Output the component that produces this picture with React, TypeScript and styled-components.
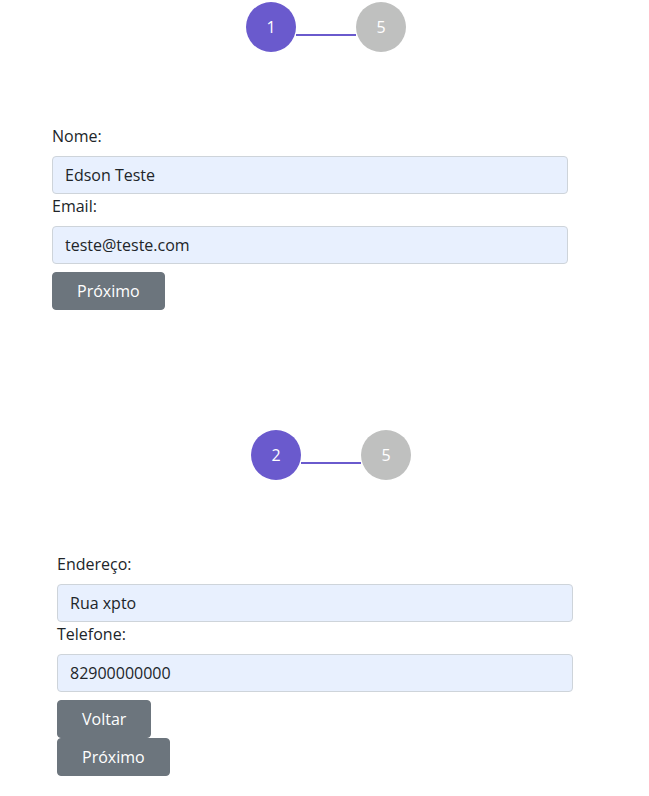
import styled, { createGlobalStyle } from 'styled-components';

const GlobalStyle = createGlobalStyle`
  body {
    margin: 0;
    font-family: "Open Sans", "Noto Sans", sans-serif;
    color: #212529;
    background: #fff;
  }
`

const purple = '#6a5acd';
const grey = '#bfc0bf';

type Field = { label: string; value: string };

const steps: { current: number; shift: number; fields: Field[]; back: boolean }[] = [
  {
    current: 1,
    shift: 0,
    fields: [
      { label: 'Nome:', value: 'Edson Teste' },
      { label: 'Email:', value: 'teste@teste.com' },
    ],
    back: false,
  },
  {
    current: 2,
    shift: 5,
    fields: [
      { label: 'Endereço:', value: 'Rua xpto' },
      { label: 'Telefone:', value: '82900000000' },
    ],
    back: true,
  },
];

function App() {
  return (
    <Page>
      <GlobalStyle />
      {steps.map((step) => (
        <Section key={step.current}>
          <Stepper $shift={step.shift}>
            <Circle $color={purple}>{step.current}</Circle>
            <Line />
            <Circle $color={grey}>5</Circle>
          </Stepper>
          <Form $shift={step.shift}>
            {step.fields.map((f) => (
              <div key={f.label}>
                <Label>{f.label}</Label>
                <Input defaultValue={f.value} />
              </div>
            ))}
            <Buttons>
              {step.back && <Button type="button">Voltar</Button>}
              <Button type="button">Próximo</Button>
            </Buttons>
          </Form>
        </Section>
      ))}
    </Page>
  );
}

const Page = styled.div`
  padding-top: 2px;
  display: flex;
  flex-direction: column;
  gap: 120px;
`

const Section = styled.section`
  display: flex;
  flex-direction: column;
  gap: 72px;
`

const Stepper = styled.div<{ $shift: number }>`
  display: flex;
  justify-content: center;
  align-items: flex-start;
  padding-left: ${(p) => 3 + p.$shift * 2}px;
`

const Circle = styled.div<{ $color: string }>`
  width: 50px;
  height: 50px;
  border-radius: 50%;
  background: ${(p) => p.$color};
  color: #fff;
  font-size: 16px;
  display: flex;
  align-items: center;
  justify-content: center;
`

const Line = styled.div`
  width: 60px;
  height: 2px;
  margin-top: 32px;
  background: ${purple};
`

const Form = styled.form<{ $shift: number }>`
  width: 516px;
  margin-left: ${(p) => 52 + p.$shift}px;
`

const Label = styled.label`
  display: block;
  font-size: 16px;
  line-height: 24px;
  margin-bottom: 8px;
`

const Input = styled.input`
  display: block;
  box-sizing: border-box;
  width: 100%;
  height: 38px;
  padding: 6px 12px;
  font-family: inherit;
  font-size: 16px;
  color: #212529;
  background: #e8f0fe;
  border: 1px solid #ced4da;
  border-radius: 4px;
  outline: none;
`

const Buttons = styled.div`
  display: flex;
  flex-direction: column;
  align-items: flex-start;
  margin-top: 8px;
`

const Button = styled.button`
  font-family: inherit;
  font-size: 16px;
  line-height: 24px;
  padding: 6px 24px;
  color: #fff;
  background: #6c757d;
  border: 1px solid #6c757d;
  border-radius: 4px;
`

export default App;
